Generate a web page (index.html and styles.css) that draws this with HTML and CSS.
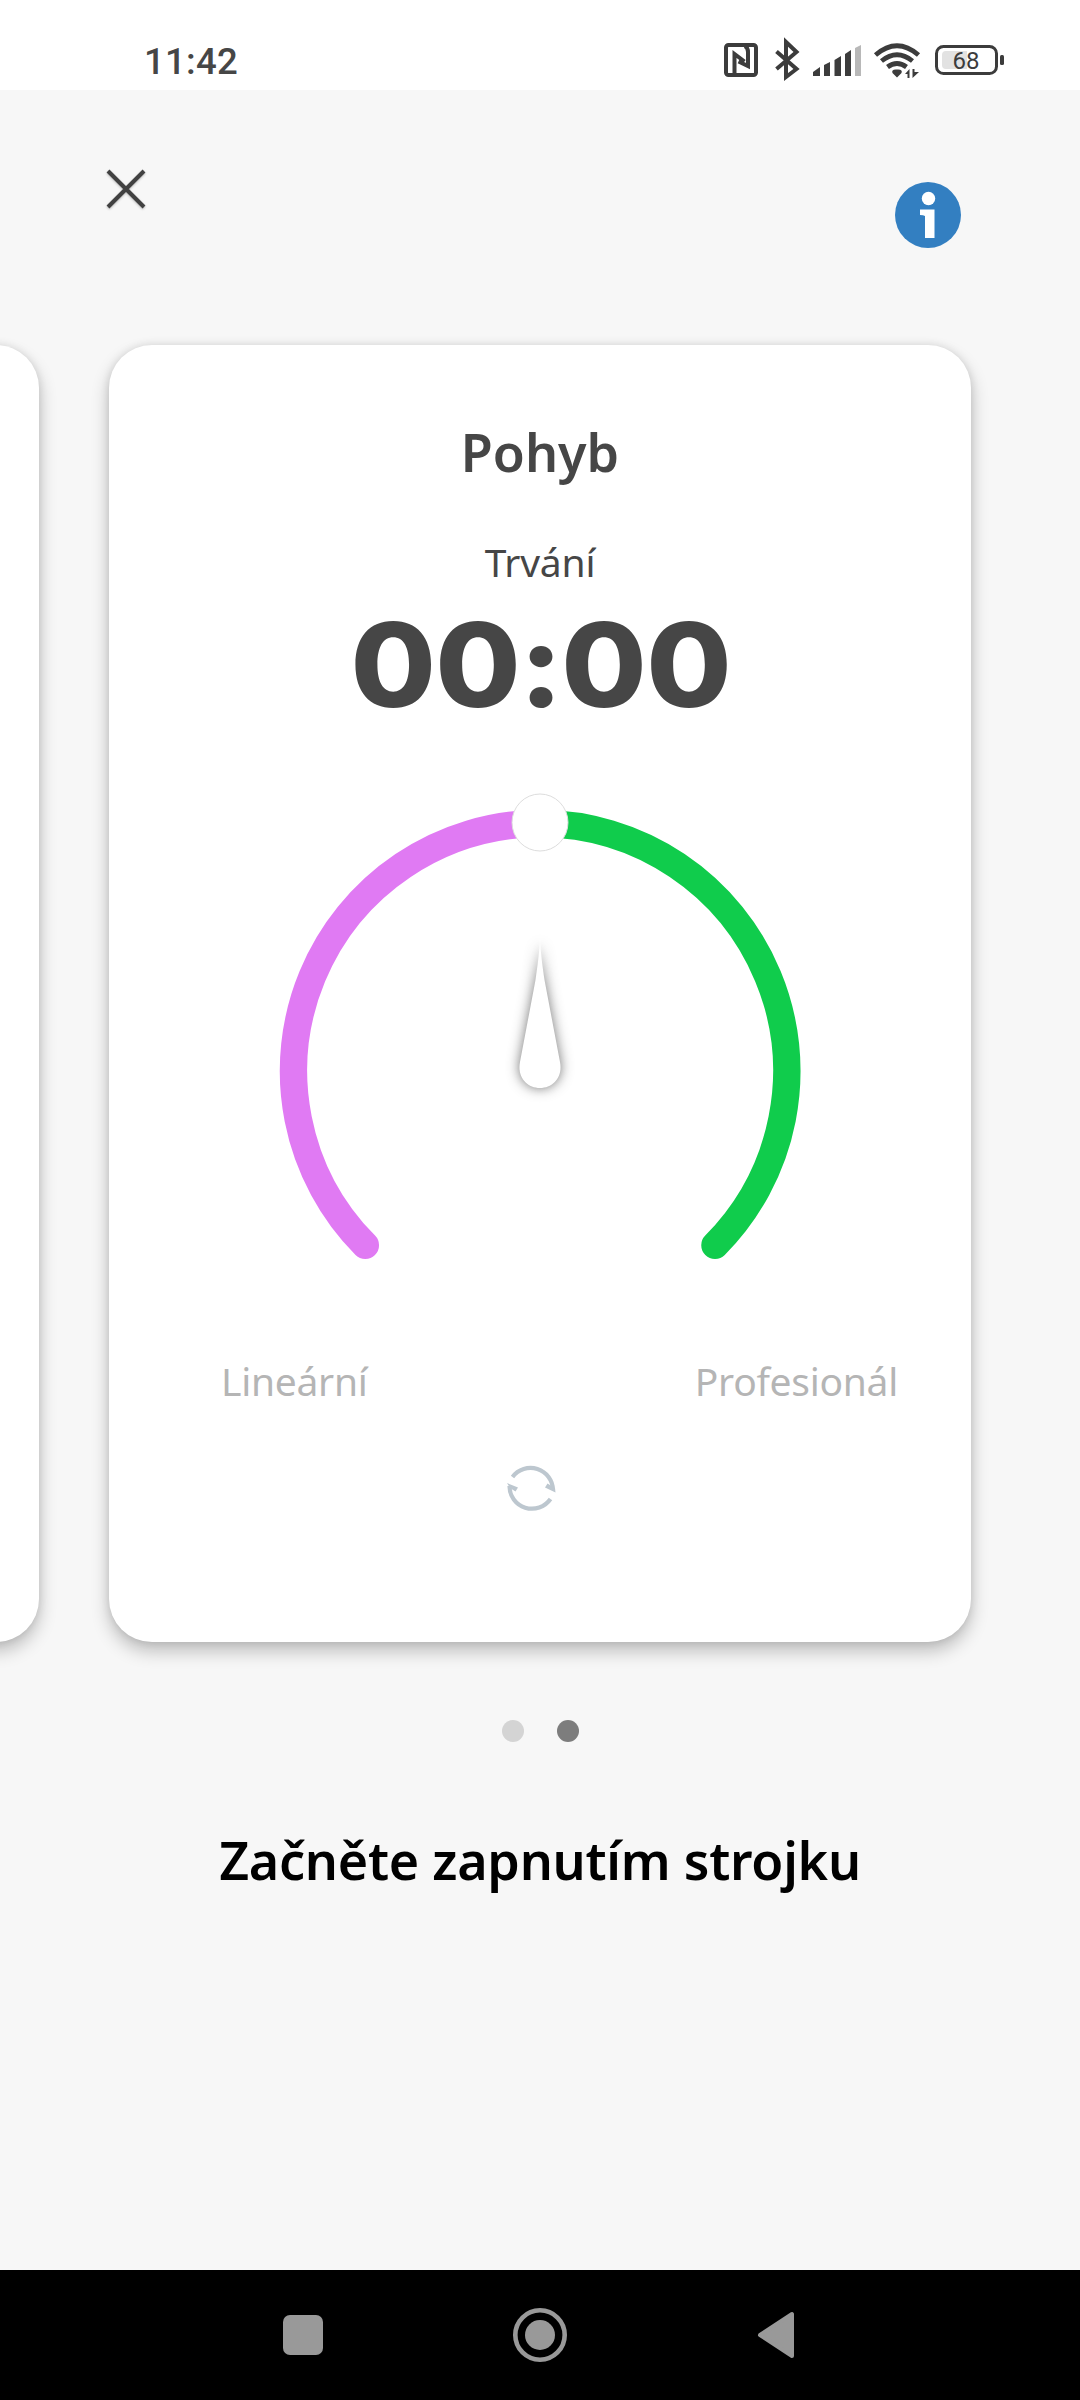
FILE: index.html
```html
<!DOCTYPE html>
<html lang="cs">
<head>
<meta charset="utf-8">
<title>Pohyb</title>
<link rel="stylesheet" href="styles.css">
</head>
<body>
<div class="screen">
  <header class="status">
    <span class="clock">11:42</span>
    <svg class="status-icons" width="290" height="50" viewBox="720 35 290 50" fill="none" stroke="#3c3c3c">
      <rect x="726" y="45" width="30" height="30" rx="2.500" stroke-width="4"/>
      <path d="M734.500 73V54L744.500 61.500M745 46Q748 48 748 52V66L738.500 61.500" stroke-width="4"/>
      <path d="M776.500 51.500L796.500 69L786 77V42L796.500 52L776.500 69" stroke-width="4"/>
      <g fill="#3c3c3c" stroke="none">
        <path d="M813 76V72L820 67V76Z"/><path d="M824 76V65L830 62V76Z"/><path d="M834.500 76V60L841 56V76Z"/><path d="M845 76V54L851 50V76Z"/>
        <path fill="#b8b8b8" d="M855 76V48L861 45V76Z"/>
        <path d="M892.500 73Q891 69 897 69.500Q903 69 901.500 73L897 77.500Z"/>
        <path d="M905 74L909.500 69V78H907.500V74ZM912.500 69H914.500V72H919L912.500 78Z"/>
      </g>
      <path d="M875.500 55Q897 36.500 918.500 55M881.500 61Q897 48.500 912.500 61M887.500 67Q897 60 906.500 67" stroke-width="4.800"/>
      <rect x="936.500" y="46.500" width="60" height="27" rx="7" stroke-width="3"/>
      <path fill="#e2e2e2" stroke="none" d="M946 51H967V69H946Q942 69 942 65V55Q942 51 946 51Z"/>
      <rect x="1000" y="55" width="4" height="10" rx="1.500" fill="#3c3c3c" stroke="none"/>
      <text class="battery" x="966" y="68.500">68</text>
    </svg>
  </header>
  <div class="toolbar">
    <svg class="close" width="44" height="44" viewBox="0 0 44 44"><path d="M4 4L40 40M40 4L4 40"/></svg>
    <svg class="info" width="66" height="66" viewBox="0 0 66 66"><circle cx="33" cy="33" r="33" fill="#337fc1"/><circle cx="33.500" cy="16.500" r="6.700" fill="#fff"/><path fill="#fff" d="M25 27.500H39.500V56H30V34Q28.500 33 25 33Z"/></svg>
  </div>
  <main class="pager">
    <section class="card card-prev"></section>
    <section class="card card-main">
      <h1 class="title">Pohyb</h1>
      <div class="label">Trvání</div>
      <div class="timer"><span class="digits">00<span class="colon">:</span>00</span></div>
      <svg class="gauge" width="560" height="500" viewBox="260 780 560 500">
        <g fill="none" stroke-width="27.500" stroke-linecap="round">
          <path stroke="#e07af3" d="M365.300 1245.300A247.500 247.500 0 0 1 540 823.500"/>
          <path stroke="#10cc4c" d="M715 1245.300A247.500 247.500 0 0 0 540 823.500"/>
        </g>
        <ellipse class="thumb" cx="540" cy="822.500" rx="28" ry="28.500"/>
        <path class="needle" d="M540 940C541 956 542.500 966 544.500 980L560 1062C563 1077 553 1088 540 1088S517 1077 520 1062L535.500 980C537.500 966 539 956 540 940Z"/>
      </svg>
      <div class="range"><span>Lineární</span><span>Profesionál</span></div>
      <svg class="refresh" width="56" height="56" viewBox="503 1460 56 56"><path d="M512.500 1477A22.500 22.500 0 0 1 553 1490M550.500 1499A22.500 22.500 0 0 1 509.500 1486"/><path class="tips" d="M555.500 1492.500L545 1487.500L547.500 1483.500L555 1488ZM507 1483L518 1487.500L515.500 1491.500L510 1488Z"/></svg>
    </section>
  </main>
  <div class="dots"><i></i><i class="active"></i></div>
  <h2 class="prompt">Začněte zapnutím strojku</h2>
  <nav class="nav">
    <svg width="56" height="56" viewBox="0 0 56 56"><rect x="8" y="8" width="40" height="40" rx="7"/></svg>
    <svg width="56" height="56" viewBox="0 0 56 56"><circle cx="28" cy="28" r="24.700" fill="none" stroke="#999" stroke-width="4.600"/><circle cx="28" cy="28" r="15"/></svg>
    <svg width="56" height="56" viewBox="0 0 56 56"><path d="M11 28L43 7V49Z" stroke="#999" stroke-width="4" stroke-linejoin="round"/></svg>
  </nav>
</div>
</body>
</html>
```
FILE: styles.css
```css
* { box-sizing: border-box; }
body { margin: 0; background: #f7f7f7; font-family: "Noto Sans", sans-serif; color: #464646; }
h1, h2 { margin: 0; font-weight: 600; }
svg { display: block; }
.screen { width: 1080px; height: 2400px; display: flex; flex-direction: column; overflow: hidden; }
.status { height: 90px; background: #fff; display: flex; align-items: flex-start; justify-content: space-between; padding: 35px 70px 0 144px; flex: none; }
.clock { font: 500 36.500px/53px Roboto, sans-serif; letter-spacing: .3px; }
.battery { font: 400 24px Roboto, sans-serif; fill: #3c3c3c; stroke: none; text-anchor: middle; }
.toolbar { height: 255px; flex: none; display: flex; justify-content: space-between; align-items: flex-start; padding: 77px 119px 0 104px; }
.close { stroke: #414141; stroke-width: 4; filter: drop-shadow(0 1px 1px #0004); }
.info { margin-top: 15px; }
.pager { height: 1297px; flex: none; display: flex; gap: 70px; }
.card { background: #fff; border-radius: 43px; box-shadow: 0 9px 18px rgba(0,0,0,.24), 0 0 9px rgba(0,0,0,.1); flex: none; }
.card-prev { width: 862px; margin-left: -823px; }
.card-main { width: 862px; display: flex; flex-direction: column; align-items: center; }
.title { margin-top: 72px; font-size: 52px; line-height: 70px; }
.label { margin-top: 48px; font-size: 39px; line-height: 54px; letter-spacing: -.2px; }
.timer { height: 140px; margin-top: 6px; font: 800 116px/140px Inter, sans-serif; font-feature-settings: "calt" 0; }
.digits { display: block; letter-spacing: -.5px; margin-right: -.500px; transform: scaleX(1.065); }
.colon { margin: 0 -1px; }
.gauge { margin-top: 45px; flex: none; }
.thumb { fill: #fff; stroke: #ddd; stroke-width: 1; }
.needle { fill: #fff; filter: drop-shadow(0 0 7px rgba(0,0,0,.42)) drop-shadow(0 0 3px rgba(0,0,0,.15)); }
.range { align-self: stretch; margin-top: 74px; padding: 0 73px 0 112px; display: flex; justify-content: space-between; font-size: 39px; line-height: 54px; letter-spacing: -.28px; color: #b5b5b5; }
.refresh { margin: 52px 0 0 -18px; fill: none; stroke: #bdc7cf; stroke-width: 4.200; }
.tips { fill: #bdc7cf; stroke: none; }
.dots { display: flex; justify-content: center; gap: 33px; margin-top: 78px; }
.dots i { width: 22px; height: 22px; border-radius: 50%; background: #d4d4d4; }
.dots .active { background: #7d7d7d; }
.prompt { margin-top: 83px; text-align: center; font-size: 52px; line-height: 70px; letter-spacing: -.25px; color: #000; }
.nav { margin-top: auto; height: 130px; background: #000; display: flex; justify-content: center; align-items: center; gap: 181px; fill: #999; }
```
